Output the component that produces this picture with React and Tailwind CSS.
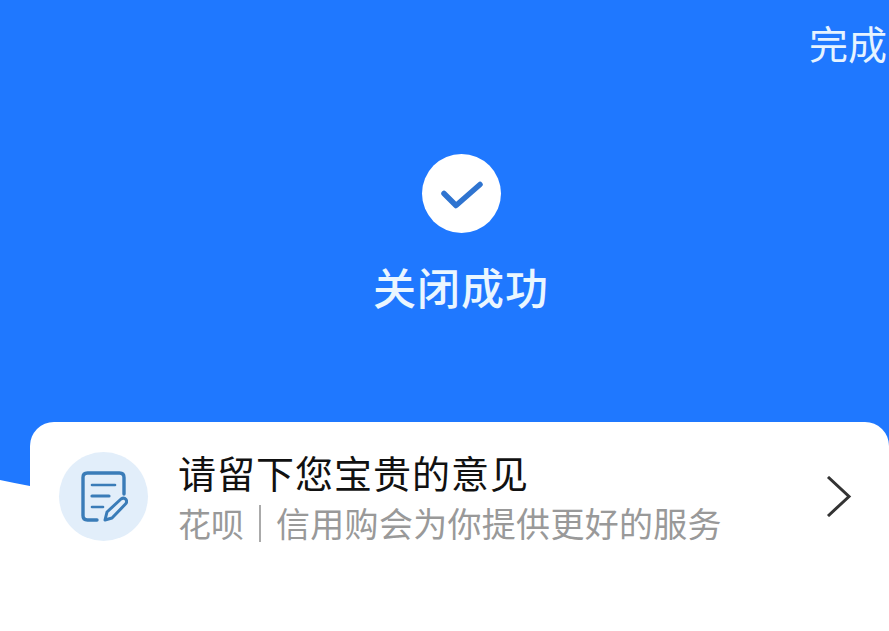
import React from 'react';

const cjk = { fontFamily: '"Noto Sans CJK SC", sans-serif' };

function NoteIcon() {
  return (
    <svg width="48" height="54" viewBox="0 0 48 54" fill="none" stroke="#3a7cb8" strokeLinecap="round" strokeLinejoin="round">
      <path d="M17 50H7.5Q3 50 3 45.5V7.5Q3 3 7.5 3H39.5Q44 3 44 7.5V24" strokeWidth="3.4" />
      <path d="M12 15H35" strokeWidth="2.6" />
      <path d="M12 26H29" strokeWidth="3.2" />
      <path d="M12 37H23" strokeWidth="2.6" />
      <path d="M25 50L27 42L41 29Q44 27 46 29.5Q47.5 32 45.5 34L32 48Z" strokeWidth="3" />
    </svg>
  );
}

export default function App() {
  return (
    <div className="relative flex h-[631px] w-[889px] flex-col overflow-hidden bg-[#1f78ff] text-white" style={cjk}>
      <div className="flex justify-end pt-[17px] text-[39px] leading-[50px] text-[#e6f3ff]">
        <span className="mr-[2px]">完成</span>
      </div>

      <div className="mt-[87px] flex flex-col items-center pl-[33px]">
        <div className="flex h-[79px] w-[79px] items-center justify-center rounded-full bg-white">
          <svg width="44" height="32" viewBox="0 0 44 32" fill="none" stroke="#2f74d0" strokeWidth="5.5" strokeLinecap="round" strokeLinejoin="round">
            <path d="M5 15.5L17 27.5L41 6.5" />
          </svg>
        </div>
        <p className="mt-[24px] text-[43px] font-medium leading-[58px] tracking-[1px] text-[#eaf6ff]">关闭成功</p>
      </div>

      {/* white wave behind the card */}
      <svg className="absolute bottom-0 left-0" width="60" height="151" viewBox="0 0 60 151">
        <path d="M0 0Q14 3 30 6H60V151H0Z" fill="#ffffff" />
      </svg>

      <div className="relative mt-[107px] ml-[30px] flex h-[209px] flex-1 flex-col rounded-t-[24px] bg-white">
        <div className="flex items-start pt-[30px] pl-[29px]">
          <div className="flex h-[89px] w-[89px] shrink-0 items-center justify-center rounded-full bg-[#e2eefa]">
            <NoteIcon />
          </div>
          <div className="ml-[30px] flex-1">
            <p className="-mt-[2px] text-[38px] leading-[44px] tracking-[1px] text-[#111111]">请留下您宝贵的意见</p>
            <p className="mt-[7px] flex items-center text-[33px] leading-[44px] text-[#999999]">
              <span>花呗</span>
              <span className="mx-[15px] h-[37px] w-[2px] bg-[#aaaaaa]" />
              <span className="text-[34px] tracking-[0.3px]">信用购会为你提供更好的服务</span>
            </p>
          </div>
          <svg className="mt-[24px] mr-[37px] shrink-0" width="26" height="41" viewBox="0 0 26 41" fill="none" stroke="#333333" strokeWidth="3">
            <path d="M2 1L23 20.5L2 40" />
          </svg>
        </div>
      </div>
    </div>
  );
}
